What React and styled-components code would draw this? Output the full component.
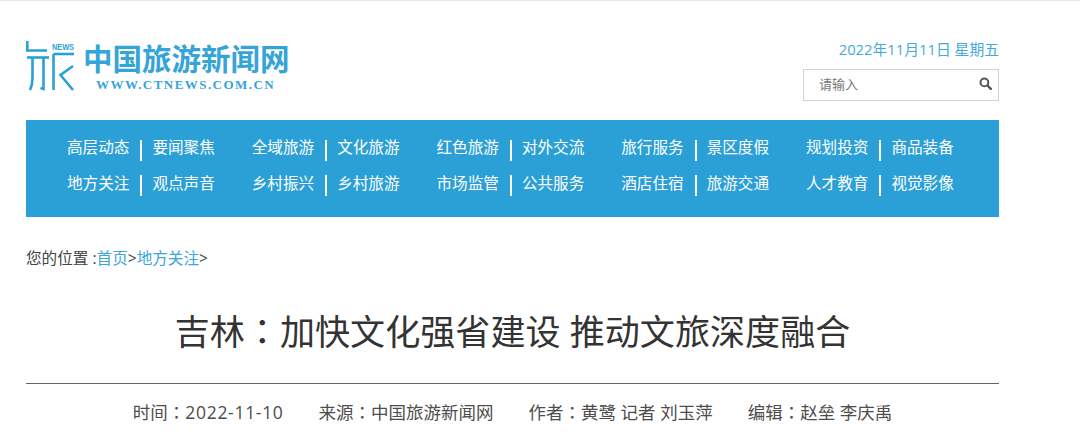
import React from "react";
import styled, { createGlobalStyle } from "styled-components";

const navRows = [
  [
    ["高层动态", "要闻聚焦"],
    ["全域旅游", "文化旅游"],
    ["红色旅游", "对外交流"],
    ["旅行服务", "景区度假"],
    ["规划投资", "商品装备"],
  ],
  [
    ["地方关注", "观点声音"],
    ["乡村振兴", "乡村旅游"],
    ["市场监管", "公共服务"],
    ["酒店住宿", "旅游交通"],
    ["人才教育", "视觉影像"],
  ],
];

const Global = createGlobalStyle`
  html, body {
    margin: 0;
    padding: 0;
    background: #fff;
    font-family: "Open Sans", "Noto Sans CJK SC", sans-serif;
    color: #333;
  }
`;

const Page = styled.div`
  width: 1080px;
  height: 436px;
  box-sizing: border-box;
  overflow: hidden;
  border-top: 1px solid #e4e8ea;
  padding: 0 81px 0 26px;
`;

const Header = styled.header`
  display: flex;
  justify-content: space-between;
  height: 119px;
`;

const Logo = styled.div`
  display: flex;
  gap: 8px;
  margin-top: 39px;
  color: #35a4d9;
`;

const LogoText = styled.div`
  display: flex;
  flex-direction: column;
`;

const LogoName = styled.div`
  font-family: "Noto Sans CJK SC", sans-serif;
  font-weight: 700;
  font-size: 29.5px;
  line-height: 34px;
  white-space: nowrap;
`;

const LogoUrl = styled.div`
  font-family: "Liberation Serif", serif;
  font-weight: 700;
  font-size: 13px;
  line-height: 14px;
  letter-spacing: 1.45px;
  margin: 4px 0 0 13px;
  white-space: nowrap;
`;

const HeaderRight = styled.div`
  display: flex;
  flex-direction: column;
  align-items: flex-end;
  padding-top: 38px;
`;

const DateText = styled.div`
  font-size: 14.8px;
  line-height: 20px;
  color: #45a9dc;
  white-space: nowrap;
`;

const SearchBox = styled.div`
  box-sizing: border-box;
  width: 196px;
  height: 32px;
  margin-top: 10px;
  border: 1px solid #d2d2d2;
  display: flex;
  align-items: center;
  justify-content: space-between;
  padding: 0 6px 3px 15px;
  font-size: 13px;
  color: #777;
`;

const Nav = styled.nav`
  box-sizing: border-box;
  height: 97px;
  padding: 20px 0 0 41px;
  background: #2ba0d6;
  display: flex;
  flex-direction: column;
  gap: 14px;
`;

const NavRow = styled.div`
  display: grid;
  grid-template-columns: repeat(5, 184.75px);
`;

const NavPair = styled.div`
  display: flex;
  align-items: center;
  height: 21px;
`;

const NavLink = styled.a`
  font-size: 15.6px;
  line-height: 16px;
  margin-top: ${(p) => p.$lift}px;
  color: #fff;
  white-space: nowrap;
`;

const NavDivider = styled.span`
  width: 2px;
  height: 21px;
  background: #fff;
  margin: 0 10px 0 11px;
`;

const Crumbs = styled.div`
  margin-top: 31px;
  font-size: 15.6px;
  line-height: 20px;
  color: #444;
`;

const CrumbLink = styled.a`
  color: #3ba5dc;
`;

const Title = styled.h1`
  margin: 38px 0 0;
  font-size: 35.1px;
  line-height: 48px;
  font-weight: 400;
  text-align: center;
  color: #333;
  white-space: nowrap;
`;

// the colon sits in the middle of its cell in the reference, as in the TC glyphs
const Colon = styled.span`
  font-family: "Noto Sans CJK TC", sans-serif;
`;

const Rule = styled.hr`
  margin: 28px 0 0;
  border: 0;
  height: 1px;
  background: #666;
`;

const Meta = styled.div`
  display: flex;
  justify-content: center;
  gap: 35px;
  margin-top: 16px;
  font-size: 17.5px;
  line-height: 24px;
  color: #4d4d4d;
  white-space: nowrap;
`;

const Digits = styled.span`
  letter-spacing: 0.7px;
`;

function LogoMark() {
  return (
    <svg width="49" height="51" viewBox="0 0 49 51" overflow="visible">
      <g fill="none" stroke="#2ba0d6" strokeWidth="2.6">
        <path d="M1.3 1v9.5H21" />
        <path d="M1 17.5h22" />
        <path d="M6.5 18v20c0 5-1 9-2.5 12" />
        <path d="M17.5 18v31l-3-1" />
        <path d="M27.5 14H48" />
        <path d="M27.5 14v36" />
        <path d="M47 26 34.5 35 47 50" />
      </g>
      <text x="26" y="10" fontFamily="Liberation Sans, sans-serif" fontSize="8.5" fontWeight="700" fill="#2ba0d6" textLength="22" lengthAdjust="spacingAndGlyphs">NEWS</text>
    </svg>
  );
}

function SearchIcon() {
  return (
    <svg width="13" height="13" viewBox="0 0 13 13">
      <circle cx="5.4" cy="5.4" r="3.9" fill="none" stroke="#555" strokeWidth="2" />
      <path d="M8.5 8.5 11.8 11.8" stroke="#555" strokeWidth="2.4" strokeLinecap="round" />
    </svg>
  );
}

export default function App() {
  return (
    <Page>
      <Global />
      <Header>
        <Logo>
          <LogoMark />
          <LogoText>
            <LogoName>中国旅游新闻网</LogoName>
            <LogoUrl>WWW.CTNEWS.COM.CN</LogoUrl>
          </LogoText>
        </Logo>
        <HeaderRight>
          <DateText>2022年11月11日 星期五</DateText>
          <SearchBox>
            请输入
            <SearchIcon />
          </SearchBox>
        </HeaderRight>
      </Header>
      <Nav>
        {navRows.map((row, i) => (
          <NavRow key={row[0][0]}>
            {row.map(([a, b]) => (
              <NavPair key={a}>
                <NavLink $lift={i === 0 ? -7 : -5}>{a}</NavLink>
                <NavDivider />
                <NavLink $lift={i === 0 ? -7 : -5}>{b}</NavLink>
              </NavPair>
            ))}
          </NavRow>
        ))}
      </Nav>
      <Crumbs>
        您的位置 :<CrumbLink>首页</CrumbLink>&gt;<CrumbLink>地方关注</CrumbLink>&gt;
      </Crumbs>
      <Title>吉林<Colon>：</Colon>加快文化强省建设 推动文旅深度融合</Title>
      <Rule />
      <Meta>
        <span>时间<Colon>：</Colon><Digits>2022-11-10</Digits></span>
        <span>来源<Colon>：</Colon>中国旅游新闻网</span>
        <span>作者<Colon>：</Colon>黄鹭 记者 刘玉萍</span>
        <span>编辑<Colon>：</Colon>赵垒 李庆禹</span>
      </Meta>
    </Page>
  );
}
